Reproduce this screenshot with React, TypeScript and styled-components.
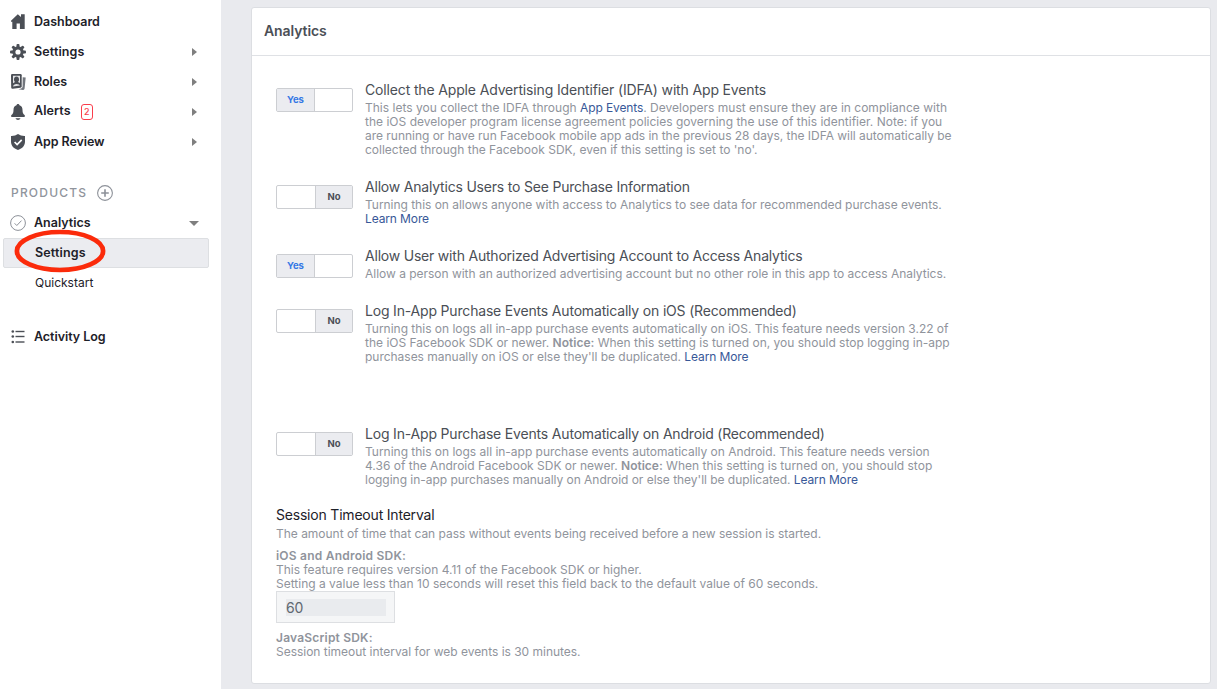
import React from "react";
import styled, { createGlobalStyle } from "styled-components";

const Global = createGlobalStyle`
  * { box-sizing: border-box; }
  body {
    margin: 0;
    background: #e9eaee;
    color: #1d2129;
    font-family: Inter, "Liberation Sans", sans-serif;
    font-size: 12px;
    overflow: hidden;
  }
`;

const Page = styled.div`
  display: flex;
  height: 689px;
`;

const Sidebar = styled.nav`
  flex: none;
  width: 221px;
  background: #fff;
  padding-top: 7px;
`;

const NavItem = styled.div<{ $top?: number }>`
  display: flex;
  align-items: center;
  height: 30px;
  margin-top: ${(p) => p.$top ?? 0}px;
  padding: 0 23px 0 10px;
`;

const IconSlot = styled.span`
  display: flex;
  width: 24px;
  svg { display: block; }
`;

const NavLabel = styled.span<{ $spacing?: number; $raised?: boolean }>`
  font-size: 12.5px;
  font-weight: 600;
  line-height: 16px;
  letter-spacing: ${(p) => p.$spacing ?? 0}px;
  padding-bottom: ${(p) => (p.$raised ? 2 : 0)}px;
  white-space: nowrap;
`;

const Badge = styled.span`
  width: 12px;
  height: 16px;
  margin-left: 10px;
  border: 1px solid #fa3e4c;
  border-radius: 3px;
  color: #fa3e4c;
  font-size: 9px;
  font-weight: 500;
  line-height: 14px;
  text-align: center;
`;

const Caret = styled.span<{ $open?: boolean }>`
  margin-left: auto;
  margin-right: ${(p) => (p.$open ? -1 : 1)}px;
  border-style: solid;
  border-color: ${(p) => (p.$open ? "#7f7f7f transparent transparent" : "transparent transparent transparent #7f7f7f")};
  border-width: ${(p) => (p.$open ? "5px 5px 0" : "4.5px 0 4.5px 5px")};
`;

const SectionHead = styled.div`
  display: flex;
  align-items: center;
  gap: 10px;
  height: 30px;
  margin-top: 21px;
  padding-left: 11px;
  color: #90949c;
  svg { display: block; }
`;

const SectionTitle = styled.span`
  padding-bottom: 2px;
  font-size: 12px;
  font-weight: 500;
  letter-spacing: 1.2px;
`;

const SubItem = styled.div<{ $active?: boolean }>`
  position: relative;
  height: 30px;
  margin: 0 12px 0 3px;
  padding-left: 31px;
  border: 1px solid ${(p) => (p.$active ? "#dddfe2" : "transparent")};
  border-radius: 2px;
  background: ${(p) => (p.$active ? "#ebecf0" : "transparent")};
  font-size: ${(p) => (p.$active ? 12.5 : 12)}px;
  font-weight: ${(p) => (p.$active ? 600 : 400)};
  letter-spacing: ${(p) => (p.$active ? 0.15 : 0)}px;
  line-height: 28px;
`;

const Ring = styled.svg`
  position: absolute;
  left: 9px;
  top: -10px;
`;

const Main = styled.main`
  flex: 1;
  padding: 7px 6px 5px 30px;
`;

const Card = styled.section`
  height: 677px;
  background: #fff;
  border: 1px solid #dcdee2;
  border-radius: 3px;
`;

const CardHead = styled.h1`
  height: 48px;
  margin: 0;
  padding-left: 12px;
  border-bottom: 1px solid #dfe1e5;
  color: #4b4f56;
  font-size: 14px;
  font-weight: 600;
  letter-spacing: -0.1px;
  line-height: 46px;
`;

const CardBody = styled.div`
  padding: 25px 24px 0;
`;

const Option = styled.div<{ $gap?: number }>`
  display: flex;
  gap: 12px;
  margin-bottom: ${(p) => p.$gap ?? 21}px;
`;

const Switch = styled.div<{ $on: boolean }>`
  display: flex;
  flex: none;
  justify-content: ${(p) => (p.$on ? "flex-start" : "flex-end")};
  width: 77px;
  height: 24px;
  margin-top: 7px;
  border: 1px solid #ccced2;
  border-radius: 2px;
`;

const Knob = styled.span<{ $on: boolean }>`
  width: ${(p) => (p.$on ? 38 : 37)}px;
  background: #ebecf0;
  border: 0 solid #ccced2;
  border-width: ${(p) => (p.$on ? "0 1px 0 0" : "0 0 0 1px")};
  color: ${(p) => (p.$on ? "#3578e5" : "#4b4f56")};
  font-size: 9.5px;
  font-weight: 700;
  line-height: 22px;
  text-align: center;
`;

const OptionTitle = styled.div<{ $dark?: boolean; $spacing?: number }>`
  height: 18px;
  margin-bottom: ${(p) => (p.$dark ? 3 : 2)}px;
  color: ${(p) => (p.$dark ? "#1d2129" : "#4b4f56")};
  font-size: 14px;
  line-height: 18px;
  letter-spacing: ${(p) => p.$spacing ?? -0.18}px;
  white-space: nowrap;
`;

const Line = styled.div<{ $spacing?: number; $top?: number }>`
  height: 14px;
  margin-top: ${(p) => p.$top ?? 0}px;
  color: #90949c;
  font-size: 12px;
  line-height: 14px;
  letter-spacing: ${(p) => p.$spacing ?? -0.02}px;
  white-space: nowrap;
  b { font-weight: 600; }
`;

const Link = styled.a`
  color: #385898;
  letter-spacing: -0.12px;
`;

const ValueBox = styled.div`
  width: 119px;
  height: 32px;
  padding: 7px 8px 6px 9px;
  background: #f5f6f7;
  border: 1px solid #dddfe2;
`;

const Value = styled.div`
  height: 17px;
  background: #e9ebee;
  color: #606770;
  font-size: 14px;
  letter-spacing: -0.3px;
  line-height: 18px;
`;

const HomeIcon = () => (
  <svg width="16" height="16" viewBox="0 0 16 16" fill="#4b4f56">
    <path d="M1 6.800 7.800.3l3.200 2.600V.2h3.700V15H9.900V9.600H6.600V15H2.300V7.700H1z" />
  </svg>
);

const GearIcon = () => (
  <svg width="16" height="16" viewBox="0 0 16 16">
    <g fill="#4b4f56">
      {[0, 45, 90, 135].map((a) => (
        <rect key={a} x="6.5" y="0" width="3" height="16" rx="1" transform={`rotate(${a} 8 8)`} />
      ))}
      <circle cx="8" cy="8" r="5.700" />
    </g>
    <circle cx="8" cy="8" r="2.6" fill="#fff" />
  </svg>
);

const RolesIcon = () => (
  <svg width="16" height="16" viewBox="0 0 16 16">
    <path d="M12.700 3.200 15.700 3.500 14.600 14.500Q14.400 16 13 15.900L8.500 15.300l2.600-.8q1.400-.4 1.500-1.700z" fill="#73777e" />
    <path d="M2.200 0h8.300q1.200 0 1.200 1.200v11q0 1.300-1.200 1.500L2.800 14.800Q1.300 15 1.200 13.600L1 1.200Q1 0 2.200 0z" fill="#4b4f56" />
    <path d="M3 1.700h7v7.200l-2-.9q1-1 1-2.600C9 3.700 8 2.600 6.500 2.600S4 3.700 4 5.400q0 1.600 1 2.600L3 9.200z" fill="#e4e5e7" />
    <circle cx="6.500" cy="5.500" r="1.900" fill="#4b4f56" />
    <path d="M3 12.500q.5-2.600 3.500-2.600t3.500 1.700z" fill="#e4e5e7" />
  </svg>
);

const BellIcon = () => (
  <svg width="16" height="16" viewBox="0 0 16 16" fill="#4b4f56">
    <path d="M8 0c.9 0 1.4.6 1.5 1.3 2.3.7 3 2.5 3 4.8 0 3 .8 3.9 2 5 .9.9.6 1.9-.6 1.9H2.1C.9 13 .6 12 1.5 11.100c1.200-1.100 2-2 2-5 0-2.300.7-4.100 3-4.800C6.600.6 7.100 0 8 0zM5.400 14.200h5.200Q9.800 16 8 16t-2.600-1.800z" />
  </svg>
);

const ShieldIcon = () => (
  <svg width="16" height="16" viewBox="0 0 16 16">
    <path d="M8 0q3 2.200 7 2v5.500c0 4-2.400 6.900-7 8.500-4.600-1.600-7-4.500-7-8.500V2q4 .2 7-2z" fill="#4b4f56" />
    <path d="m4.600 8 2.500 2.500 4.600-4.700" fill="none" stroke="#fff" strokeWidth="1.700" />
  </svg>
);

const PlusIcon = () => (
  <svg width="16" height="16" viewBox="0 0 16 16" fill="none" stroke="#8d9199">
    <circle cx="8" cy="8" r="7.400" strokeWidth="1.100" />
    <path d="M8 4.200v7.600M4.200 8h7.600" strokeWidth="1.600" />
  </svg>
);

const CheckIcon = () => (
  <svg width="16" height="16" viewBox="0 0 16 16" fill="none" stroke="#8d9199">
    <circle cx="8" cy="8" r="7.400" />
    <path d="m4.600 8.300 2.200 2.200 4.700-4.900" />
  </svg>
);

const ListIcon = () => (
  <svg width="16" height="16" viewBox="0 0 16 16" fill="#4b4f56">
    {[2.5, 7.5, 13].map((y) => (
      <React.Fragment key={y}>
        <circle cx="2.800" cy={y} r="1.300" />
        <rect x="5.500" y={y - 0.7} width="9" height="1.400" />
      </React.Fragment>
    ))}
  </svg>
);

export default function App() {
  return (
    <>
      <Global />
      <Page>
        <Sidebar>
          <NavItem><IconSlot><HomeIcon /></IconSlot><NavLabel>Dashboard</NavLabel></NavItem>
          <NavItem><IconSlot><GearIcon /></IconSlot><NavLabel $spacing={0.12}>Settings</NavLabel><Caret /></NavItem>
          <NavItem><IconSlot><RolesIcon /></IconSlot><NavLabel>Roles</NavLabel><Caret /></NavItem>
          <NavItem><IconSlot><BellIcon /></IconSlot><NavLabel $raised $spacing={0.1}>Alerts</NavLabel><Badge>2</Badge><Caret /></NavItem>
          <NavItem><IconSlot><ShieldIcon /></IconSlot><NavLabel $spacing={-0.08}>App Review</NavLabel><Caret /></NavItem>
          <SectionHead><SectionTitle>PRODUCTS</SectionTitle><PlusIcon /></SectionHead>
          <NavItem><IconSlot><CheckIcon /></IconSlot><NavLabel>Analytics</NavLabel><Caret $open /></NavItem>
          <SubItem $active>
            Settings
            <Ring width="94" height="44" viewBox="0 0 94 44">
              <ellipse cx="47" cy="22" rx="43.100" ry="19" fill="none" stroke="#fb2b0b" strokeWidth="4.700" />
            </Ring>
          </SubItem>
          <SubItem>Quickstart</SubItem>
          <NavItem $top={24}><IconSlot><ListIcon /></IconSlot><NavLabel $spacing={-0.05}>Activity Log</NavLabel></NavItem>
        </Sidebar>
        <Main>
          <Card>
            <CardHead>Analytics</CardHead>
            <CardBody>
              <Option>
                <Switch $on><Knob $on>Yes</Knob></Switch>
                <div>
                  <OptionTitle $spacing={-0.15}>Collect the Apple Advertising Identifier (IDFA) with App Events</OptionTitle>
                  <Line $spacing={0.015}>This lets you collect the IDFA through <Link>App Events</Link>. Developers must ensure they are in compliance with</Line>
                  <Line $spacing={0.01}>the iOS developer program license agreement policies governing the use of this identifier. Note: if you</Line>
                  <Line $spacing={-0.025}>are running or have run Facebook mobile app ads in the previous 28 days, the IDFA will automatically be</Line>
                  <Line $spacing={0}>collected through the Facebook SDK, even if this setting is set to 'no'.</Line>
                </div>
              </Option>
              <Option>
                <Switch $on={false}><Knob $on={false}>No</Knob></Switch>
                <div>
                  <OptionTitle $spacing={-0.2}>Allow Analytics Users to See Purchase Information</OptionTitle>
                  <Line $spacing={-0.035}>Turning this on allows anyone with access to Analytics to see data for recommended purchase events.</Line>
                  <Line><Link>Learn More</Link></Line>
                </div>
              </Option>
              <Option>
                <Switch $on><Knob $on>Yes</Knob></Switch>
                <div>
                  <OptionTitle $spacing={-0.21}>Allow User with Authorized Advertising Account to Access Analytics</OptionTitle>
                  <Line>Allow a person with an authorized advertising account but no other role in this app to access Analytics.</Line>
                </div>
              </Option>
              <Option $gap={61}>
                <Switch $on={false}><Knob $on={false}>No</Knob></Switch>
                <div>
                  <OptionTitle>Log In-App Purchase Events Automatically on iOS (Recommended)</OptionTitle>
                  <Line>Turning this on logs all in-app purchase events automatically on iOS. This feature needs version 3.22 of</Line>
                  <Line $spacing={0}>the iOS Facebook SDK or newer. <b>Notice:</b> When this setting is turned on, you should stop logging in-app</Line>
                  <Line>purchases manually on iOS or else they'll be duplicated. <Link>Learn More</Link></Line>
                </div>
              </Option>
              <Option $gap={19}>
                <Switch $on={false}><Knob $on={false}>No</Knob></Switch>
                <div>
                  <OptionTitle>Log In-App Purchase Events Automatically on Android (Recommended)</OptionTitle>
                  <Line>Turning this on logs all in-app purchase events automatically on Android. This feature needs version</Line>
                  <Line $spacing={0}>4.36 of the Android Facebook SDK or newer. <b>Notice:</b> When this setting is turned on, you should stop</Line>
                  <Line $spacing={-0.03}>logging in-app purchases manually on Android or else they'll be duplicated. <Link>Learn More</Link></Line>
                </div>
              </Option>
              <OptionTitle $dark $spacing={-0.2}>Session Timeout Interval</OptionTitle>
              <Line>The amount of time that can pass without events being received before a new session is started.</Line>
              <Line $top={8} $spacing={0.22}><b>iOS and Android SDK:</b></Line>
              <Line $spacing={0}>This feature requires version 4.11 of the Facebook SDK or higher.</Line>
              <Line $spacing={0}>Setting a value less than 10 seconds will reset this field back to the default value of 60 seconds.</Line>
              <ValueBox><Value>60</Value></ValueBox>
              <Line $top={8} $spacing={0.2}><b>JavaScript SDK:</b></Line>
              <Line>Session timeout interval for web events is 30 minutes.</Line>
            </CardBody>
          </Card>
        </Main>
      </Page>
    </>
  );
}
